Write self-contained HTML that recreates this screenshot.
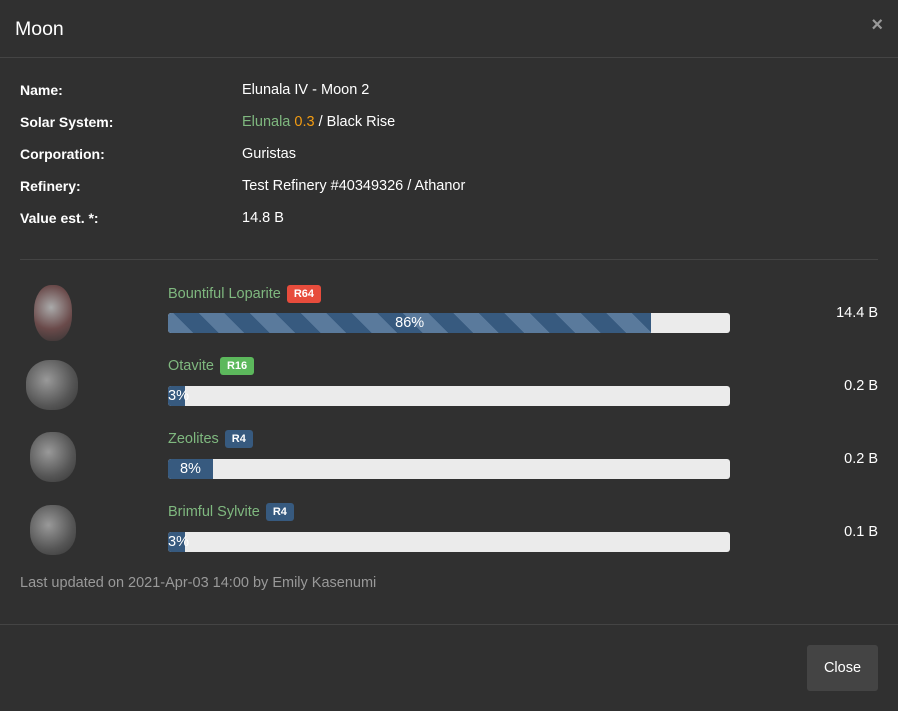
<!DOCTYPE html><html><head><style>
body{margin:0;width:898px;height:711px;background:#303030;font-family:"Liberation Sans",sans-serif;color:#fff;position:relative;overflow:hidden}
.a{position:absolute}
.hr{position:absolute;left:0;right:0;height:1px;background:#444}
.lbl{font-weight:bold;font-size:14px;left:20px}
.val{font-size:14.5px;left:242px}
.name{font-size:14.5px;color:#7fb87f;left:168px}
.badge{display:inline-block;font-size:11px;font-weight:bold;color:#fff;padding:3px 7px;border-radius:3px;margin-left:6px;vertical-align:1px}
.bar{left:168px;width:562px;height:20px;background:#ebebeb;border-radius:3px;overflow:hidden}
.fill{height:100%;background:#375a7f;color:#fff;font-size:14.5px;text-align:center;line-height:20px}
.num{right:20px;font-size:14.5px}
.rock{left:26px;width:52px;height:50px;border-radius:45%;background:radial-gradient(circle at 40% 40%,#999,#555 60%,#333)}
</style></head><body>
<div class="a" style="left:15px;top:18px;font-size:19.5px">Moon</div>
<div class="a" style="right:15px;top:14px;font-size:20px;color:#999;font-weight:bold">×</div>
<div class="hr" style="top:57px"></div>
<div class="a lbl" style="top:82px">Name:</div><div class="a val" style="top:82px">Elunala IV - Moon 2</div>
<div class="a lbl" style="top:114px">Solar System:</div><div class="a val" style="top:114px"><span style="color:#7fb87f">Elunala</span> <span style="color:#f39c12">0.3</span> / Black Rise</div>
<div class="a lbl" style="top:146px">Corporation:</div><div class="a val" style="top:146px">Guristas</div>
<div class="a lbl" style="top:178px">Refinery:</div><div class="a val" style="top:178px">Test Refinery #40349326 / Athanor</div>
<div class="a lbl" style="top:210px">Value est. *:</div><div class="a val" style="top:210px">14.8 B</div>
<div class="hr" style="top:259px;left:20px;right:20px"></div>

<div class="a rock" style="top:285px;left:34px;width:38px;height:56px;background:radial-gradient(circle at 45% 40%,#aaa,#6a4a4a 55%,#333)"></div>
<div class="a name" style="top:285px">Bountiful Loparite<span class="badge" style="background:#e74c3c">R64</span></div>
<div class="a bar" style="top:313px"><div class="fill" style="width:86%;background:repeating-linear-gradient(45deg,#5a7a9c 0 18px,#375a7f 18px 36px)">86%</div></div>
<div class="a num" style="top:305px">14.4 B</div>

<div class="a rock" style="top:360px"></div>
<div class="a name" style="top:357px">Otavite<span class="badge" style="background:#5cb85c">R16</span></div>
<div class="a bar" style="top:386px"><div class="fill" style="width:3%;text-align:left">3%</div></div>
<div class="a num" style="top:378px">0.2 B</div>

<div class="a rock" style="top:432px;left:30px;width:46px"></div>
<div class="a name" style="top:430px">Zeolites<span class="badge" style="background:#375a7f">R4</span></div>
<div class="a bar" style="top:459px"><div class="fill" style="width:8%">8%</div></div>
<div class="a num" style="top:451px">0.2 B</div>

<div class="a rock" style="top:505px;left:30px;width:46px"></div>
<div class="a name" style="top:503px">Brimful Sylvite<span class="badge" style="background:#375a7f">R4</span></div>
<div class="a bar" style="top:532px"><div class="fill" style="width:3%;text-align:left">3%</div></div>
<div class="a num" style="top:524px">0.1 B</div>

<div class="a" style="left:20px;top:575px;font-size:14.5px;color:#999">Last updated on 2021-Apr-03 14:00 by Emily Kasenumi</div>
<div class="hr" style="top:624px"></div>
<div class="a" style="left:807px;top:645px;width:71px;height:46px;background:#444;border-radius:3px;font-size:14.5px;line-height:46px;text-align:center">Close</div>
</body></html>
